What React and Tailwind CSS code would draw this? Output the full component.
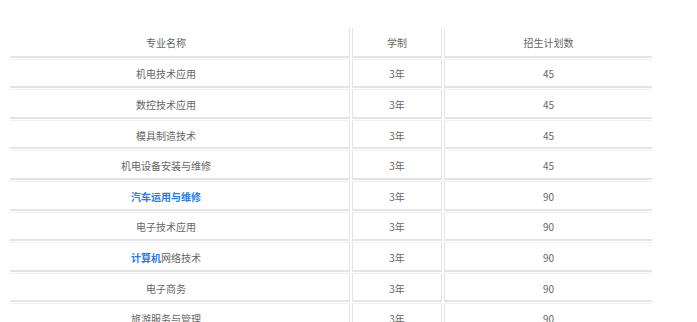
import React from "react";

const rows = [
  { name: "机电技术应用", years: "3年", plan: 45 },
  { name: "数控技术应用", years: "3年", plan: 45 },
  { name: "模具制造技术", years: "3年", plan: 45 },
  { name: "机电设备安装与维修", years: "3年", plan: 45 },
  { name: <b className="text-[#2a7ae2]">汽车运用与维修</b>, years: "3年", plan: 90 },
  { name: "电子技术应用", years: "3年", plan: 90 },
  { name: <><b className="text-[#2a7ae2]">计算机</b>网络技术</>, years: "3年", plan: 90 },
  { name: "电子商务", years: "3年", plan: 90 },
  { name: "旅游服务与管理", years: "3年", plan: 90 },
];

const Row = ({ a, b, c, head }) => (
  <div className="flex gap-[2px] mb-[1px]">
    <div className={"w-[340px] h-[29.6px] pt-[2px] pr-[27px] flex items-center justify-center border-r border-b-2 border-[#e4e4e4]" + (head ? "" : " border-t border-t-[#f0f0f0]")}>
      {a}
    </div>
    <div className={"w-[90px] h-[29.6px] pt-[2px] flex items-center justify-center border-x border-b-2 border-[#e4e4e4]" + (head ? "" : " border-t border-t-[#f0f0f0]")}>
      {b}
    </div>
    <div className={"w-[208px] h-[29.6px] pt-[2px] flex items-center justify-center border-l border-b-2 border-[#e4e4e4]" + (head ? "" : " border-t border-t-[#f0f0f0]")}>
      {c}
    </div>
  </div>
);

export default function App() {
  return (
    <div className="w-[697px] h-[322px] overflow-hidden bg-white pt-[28px] pl-[10px] text-[10px] text-[#666] font-['Microsoft_YaHei','Noto_Sans_CJK_SC',sans-serif]">
      <Row head a="专业名称" b="学制" c="招生计划数" />
      {rows.map((r, i) => (
        <Row key={i} a={r.name} b={r.years} c={r.plan} />
      ))}
    </div>
  );
}
